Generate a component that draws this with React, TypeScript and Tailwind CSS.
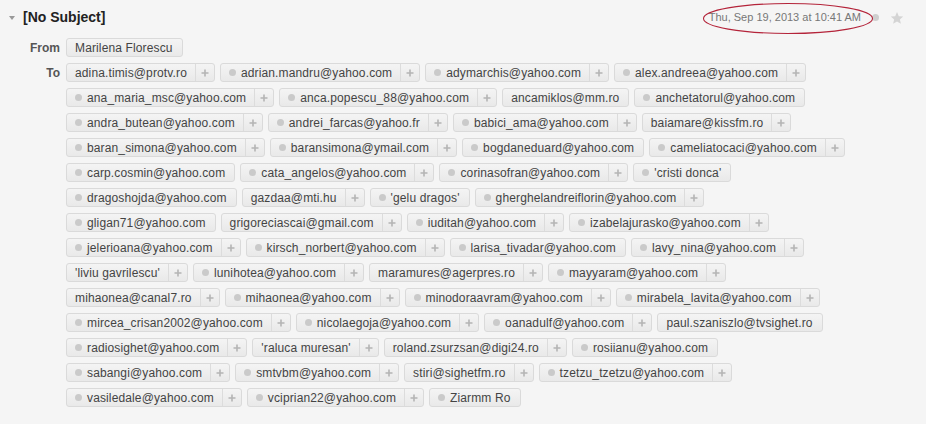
import React from 'react';

type Person = { name: string; dot?: boolean; plus?: boolean };

// rows as they wrap in the reference, d = presence dot, p = add button
const r = (name: string, flags: string): Person => ({
  name,
  dot: flags.includes('d'),
  plus: flags.includes('p'),
});

const rows: Person[][] = [
  [r('adina.timis@protv.ro', 'p'), r('adrian.mandru@yahoo.com', 'dp'), r('adymarchis@yahoo.com', 'dp'), r('alex.andreea@yahoo.com', 'dp')],
  [r('ana_maria_msc@yahoo.com', 'dp'), r('anca.popescu_88@yahoo.com', 'dp'), r('ancamiklos@mm.ro', ''), r('anchetatorul@yahoo.com', 'd')],
  [r('andra_butean@yahoo.com', 'dp'), r('andrei_farcas@yahoo.fr', 'dp'), r('babici_ama@yahoo.com', 'dp'), r('baiamare@kissfm.ro', 'p')],
  [r('baran_simona@yahoo.com', 'dp'), r('baransimona@ymail.com', 'dp'), r('bogdaneduard@yahoo.com', 'd'), r('cameliatocaci@yahoo.com', 'dp')],
  [r('carp.cosmin@yahoo.com', 'd'), r('cata_angelos@yahoo.com', 'dp'), r('corinasofran@yahoo.com', 'dp'), r("'cristi donca'", 'd')],
  [r('dragoshojda@yahoo.com', 'd'), r('gazdaa@mti.hu', 'p'), r("'gelu dragos'", 'd'), r('gherghelandreiflorin@yahoo.com', 'dp')],
  [r('gligan71@yahoo.com', 'd'), r('grigoreciascai@gmail.com', 'p'), r('iuditah@yahoo.com', 'dp'), r('izabelajurasko@yahoo.com', 'dp')],
  [r('jelerioana@yahoo.com', 'dp'), r('kirsch_norbert@yahoo.com', 'dp'), r('larisa_tivadar@yahoo.com', 'd'), r('lavy_nina@yahoo.com', 'dp')],
  [r("'liviu gavrilescu'", 'p'), r('lunihotea@yahoo.com', 'dp'), r('maramures@agerpres.ro', 'p'), r('mayyaram@yahoo.com', 'dp')],
  [r('mihaonea@canal7.ro', 'p'), r('mihaonea@yahoo.com', 'dp'), r('minodoraavram@yahoo.com', 'dp'), r('mirabela_lavita@yahoo.com', 'dp')],
  [r('mircea_crisan2002@yahoo.com', 'dp'), r('nicolaegoja@yahoo.com', 'dp'), r('oanadulf@yahoo.com', 'dp'), r('paul.szaniszlo@tvsighet.ro', '')],
  [r('radiosighet@yahoo.com', 'dp'), r("'raluca muresan'", 'p'), r('roland.zsurzsan@digi24.ro', 'p'), r('rosiianu@yahoo.com', 'd')],
  [r('sabangi@yahoo.com', 'dp'), r('smtvbm@yahoo.com', 'dp'), r('stiri@sighetfm.ro', 'p'), r('tzetzu_tzetzu@yahoo.com', 'dp')],
  [r('vasiledale@yahoo.com', 'dp'), r('vciprian22@yahoo.com', 'dp'), r('Ziarmm Ro', 'd')],
];

const PlusIcon = () => (
  <svg width="8" height="8" viewBox="0 0 8 8">
    <path d="M4 0.5v7M0.5 4h7" stroke="#b4b4b4" strokeWidth="1.6" />
  </svg>
);

const Chip: React.FC<{ person: Person }> = ({ person }) => (
  <div className="flex h-[19px] items-stretch rounded-[3px] border border-[#dadada] bg-gradient-to-b from-[#f4f4f4] to-[#e9e9e9] text-[12px] leading-none tracking-[0.13px] text-[#444]">
    <span className={`flex items-center pl-[8px] ${person.plus ? 'pr-[8px]' : 'pr-[9px]'}`}>
      {person.dot && <span className="mr-[5px] h-[7px] w-[7px] rounded-full bg-[#cacaca]" />}
      {person.name}
    </span>
    {person.plus && (
      <span className="flex w-[19px] items-center justify-center border-l border-[#dcdcdc]">
        <PlusIcon />
      </span>
    )}
  </div>
);

export default function App() {
  return (
    <div className="relative h-[424px] w-[926px] overflow-hidden bg-[#f5f5f5] font-['Liberation_Sans',Arial,sans-serif]">
      {/* header */}
      <div className="flex h-[35px] items-center">
        <svg className="ml-[9px] mr-[8px]" width="6" height="4" viewBox="0 0 6 4">
          <path d="M0 0h6L3 4z" fill="#999" />
        </svg>
        <span className="text-[14px] font-bold text-[#222]">[No Subject]</span>
        <div className="ml-auto mr-[22px] flex items-center">
          <span className="text-[11px] text-[#777]">Thu, Sep 19, 2013 at 10:41 AM</span>
          <span className="ml-[11px] h-[7px] w-[7px] rounded-full bg-[#cfcfcf]" />
          <svg className="ml-[11px]" width="14" height="14" viewBox="0 0 24 24">
            <path d="M12 1.8l3.1 7 7.5.6-5.7 5 1.8 7.4L12 17.8l-6.7 4 1.8-7.4-5.7-5 7.5-.6z" fill="#d4d4d4" />
          </svg>
        </div>
      </div>

      {/* red annotation */}
      <svg className="absolute left-[702px] top-[2px]" width="174" height="33" viewBox="0 0 174 33">
        <ellipse cx="86" cy="16.5" rx="84.5" ry="15" fill="none" stroke="#b4243a" strokeWidth="1.1" />
      </svg>

      {/* from / to */}
      <div className="mt-[3px] grid grid-cols-[60px_1fr] gap-x-[6px] gap-y-[6px] text-[12px]">
        <div className="flex h-[19px] items-center justify-end font-bold text-[#555]">From</div>
        <div className="flex">
          <Chip person={{ name: 'Marilena Florescu' }} />
        </div>
        <div className="flex h-[19px] items-center justify-end font-bold text-[#555]">To</div>
        <div className="flex flex-col gap-y-[6px]">
          {rows.map((row, i) => (
            <div key={i} className="flex gap-x-[5px]">
              {row.map((p) => (
                <Chip key={p.name} person={p} />
              ))}
            </div>
          ))}
        </div>
      </div>
    </div>
  );
}
